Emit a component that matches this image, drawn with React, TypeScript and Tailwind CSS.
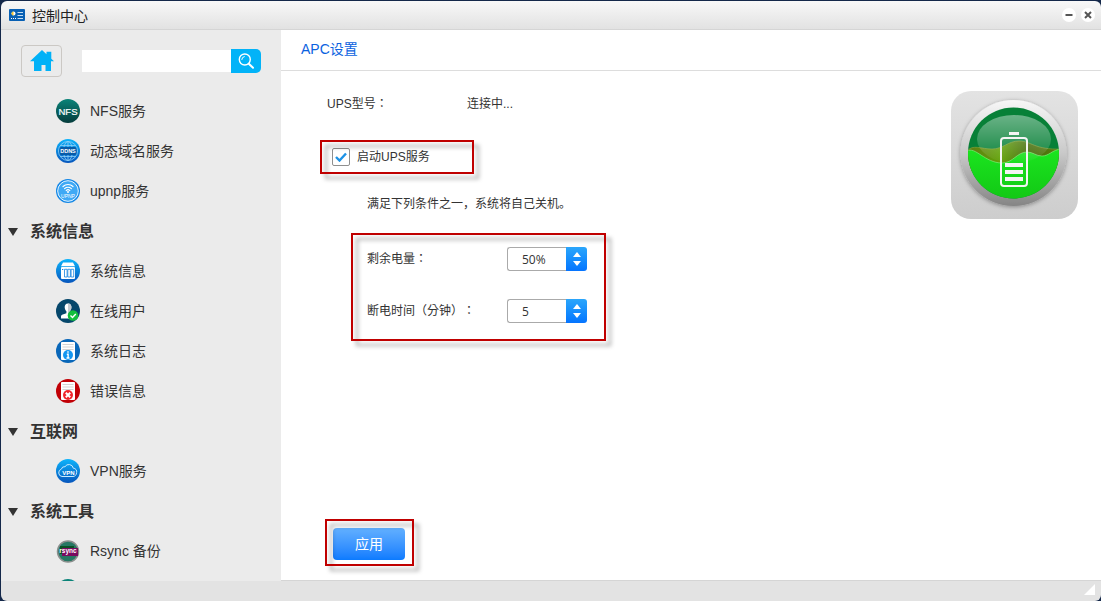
import React, { useState } from "react";

interface MenuItem {
  label: string;
  icon: React.ReactNode;
}

interface MenuGroup {
  title?: string;
  items: MenuItem[];
}

const NfsIcon = () => (
  <svg viewBox="0 0 24 24" className="w-6 h-6">
    <defs>
      <linearGradient id="nfs" x1="0" y1="0" x2="0" y2="1">
        <stop offset="0" stopColor="#0a8378" />
        <stop offset="1" stopColor="#063c3c" />
      </linearGradient>
    </defs>
    <circle cx="12" cy="12" r="12" fill="url(#nfs)" />
    <text x="12" y="15.5" textAnchor="middle" fontSize="9.5" fill="#fff" stroke="#fff" strokeWidth="0.2">
      NFS
    </text>
  </svg>
);

const DdnsIcon = () => (
  <svg viewBox="0 0 24 24" className="w-6 h-6">
    <circle cx="12" cy="12" r="12" fill="url(#blue)" />
    <g fill="none" stroke="#8fd0f8" strokeWidth="0.8">
      <circle cx="12" cy="12" r="9.5" />
      <ellipse cx="12" cy="12" rx="4.5" ry="9.5" />
      <path d="M12 2.5v19M4.5 6.5h15M4.5 17.5h15" />
    </g>
    <rect x="3.5" y="8" width="17" height="8" rx="2" fill="#075ba8" />
    <text x="12" y="14.2" textAnchor="middle" fontSize="5.5" fontWeight="bold" fill="#fff">
      DDNS
    </text>
  </svg>
);

const UpnpIcon = () => (
  <svg viewBox="0 0 24 24" className="w-6 h-6">
    <circle cx="12" cy="12" r="12" fill="#1487e6" />
    <circle cx="12" cy="12" r="10.3" fill="#3fa9f5" stroke="#e5f5ff" strokeWidth="1" />
    <g fill="none" stroke="#fff" strokeWidth="1.2" strokeLinecap="round">
      <path d="M7 7.5a7.3 7.3 0 0 1 10 0M8.6 9.6a5 5 0 0 1 6.8 0M10.2 11.6a2.6 2.6 0 0 1 3.6 0" />
    </g>
    <circle cx="12" cy="13" r="1" fill="#fff" />
    <text x="12" y="19" textAnchor="middle" fontSize="5" fill="#fff">
      UPNP
    </text>
  </svg>
);

const ServerIcon = () => (
  <svg viewBox="0 0 24 24" className="w-6 h-6">
    <circle cx="12" cy="12" r="12" fill="url(#blue)" />
    <path d="M7 3.5h10l2 3.8H5z" fill="#fff" />
    <rect x="5" y="8" width="14" height="12" rx="1" fill="#fff" />
    <g fill="#fff" stroke="#1583df" strokeWidth="0.8">
      <path d="M8.5 10.3h2.6v7.700H8.500zM11.800 10.300h2.600v7.700h-2.600zM15.100 10.300h2.600v7.700h-2.600z" />
    </g>
    <path d="M6 10.500h1.300" stroke="#1583df" />
  </svg>
);

const UserIcon = () => (
  <svg viewBox="0 0 24 24" className="w-6 h-6">
    <circle cx="12" cy="12" r="12" fill="#06476b" />
    <path
      d="M12 4.500c2.500 0 3.600 1.700 3.400 4-.1 1.700-.8 3-1.600 3.800v2l5.200 2.500v2.700H5v-2.200c0-1 .8-1.500 1.800-1.800l3.600-1.300v-2c-1-.9-1.600-2.200-1.700-3.700-.2-2.300.9-4 3.300-4z"
      fill="#fff"
    />
    <path d="M12 4.500c2.500 0 3.600 1.700 3.400 4-.1 1.700-.8 3-1.600 3.800v2l5.200 2.500v2.700h-7z" fill="#c5cbd0" />
    <circle cx="17" cy="16.500" r="5.300" fill="#12bf3c" />
    <path d="M14.500 16.500l2 2 3.300-3.500" fill="none" stroke="#fff" strokeWidth="1.400" />
  </svg>
);

const LogIcon = ({ error = false }: { error?: boolean }) => (
  <svg viewBox="0 0 24 24" className="w-6 h-6">
    <circle cx="12" cy="12" r="12" fill={error ? "#c10006" : "#0967b9"} />
    <rect x="5" y="3" width="14" height="18" rx="1" fill="#fff" />
    <path d="M6.500 5.500h11M6.500 8h11M6.500 10.500h11" stroke="#d3d3d3" />
    <circle cx="12" cy="16" r="5" fill={error ? "#f0262c" : "#1496f0"} />
    {error ? (
      <path d="M9.800 13.800l4.400 4.400M14.200 13.800l-4.400 4.400" stroke="#fff" strokeWidth="2" />
    ) : (
      <path d="M12 12.300v1.500M10.800 15.200h1.300v3.800M10.500 19h3" fill="none" stroke="#fff" strokeWidth="1.400" />
    )}
  </svg>
);

const VpnIcon = () => (
  <svg viewBox="0 0 24 24" className="w-6 h-6">
    <circle cx="12" cy="12" r="12" fill="url(#blue)" />
    <path
      d="M6 17.500a3.800 3.800 0 0 1-.6-7.400A3.200 3.200 0 0 1 9 7.700a4.500 4.500 0 0 1 8.300 1.500 3.500 3.500 0 0 1 3.300 4.500c-.2 2.300-1.600 3.800-3.600 3.800z"
      fill="none"
      stroke="#c7eaff"
    />
    <text x="12.500" y="16" textAnchor="middle" fontSize="6" fontWeight="bold" fill="#fff">
      VPN
    </text>
  </svg>
);

const RsyncIcon = () => (
  <svg viewBox="0 0 24 24" className="w-6 h-6">
    <circle cx="12" cy="12.500" r="10.500" fill="#267763" stroke="#8b8f8d" strokeWidth="1.500" />
    <rect x="4" y="7" width="14" height="8" fill="#0a5124" />
    <rect x="6" y="9" width="16" height="8" fill="#7b0b60" />
    <text x="12" y="14" textAnchor="middle" fontSize="6.500" fontWeight="bold" fill="#fff">
      rsync
    </text>
  </svg>
);

const menu: MenuGroup[] = [
  {
    items: [
      { label: "NFS服务", icon: <NfsIcon /> },
      { label: "动态域名服务", icon: <DdnsIcon /> },
      { label: "upnp服务", icon: <UpnpIcon /> },
    ],
  },
  {
    title: "系统信息",
    items: [
      { label: "系统信息", icon: <ServerIcon /> },
      { label: "在线用户", icon: <UserIcon /> },
      { label: "系统日志", icon: <LogIcon /> },
      { label: "错误信息", icon: <LogIcon error /> },
    ],
  },
  {
    title: "互联网",
    items: [{ label: "VPN服务", icon: <VpnIcon /> }],
  },
  {
    title: "系统工具",
    items: [{ label: "Rsync 备份", icon: <RsyncIcon /> }],
  },
];

const TitleBar = () => (
  <header className="flex items-center h-[29px] shrink-0 pl-2 pr-1.5 border-b border-[#d5d5d5] bg-linear-to-b from-[#f8f8f8] to-[#e2e2e2]">
    <svg viewBox="0 0 16 12" className="w-4 h-3">
      <rect width="16" height="12" rx="1" fill="#0860b4" />
      <circle cx="4.500" cy="4.500" r="2" fill="#fff" />
      <path d="M4.500 4.500V2.500a2 2 0 0 0 0 4z" fill="#f6c530" />
      <path d="M8.500 3.500h5.500M8.500 6.500h5.500M8.500 9.500h5.500" stroke="#c5ddf2" />
      <path d="M2 9.500h5" stroke="#fff" strokeDasharray="1 1" />
    </svg>
    <h1 className="ml-[7px] pt-px text-sm text-[#222]">控制中心</h1>
    <div className="ml-auto flex gap-[5px]">
      <button aria-label="最小化" className="w-3.5 h-3.5 rounded-full bg-white">
        <svg viewBox="0 0 14 14">
          <path d="M3.500 7h7" stroke="#555" strokeWidth="2" />
        </svg>
      </button>
      <button aria-label="关闭" className="w-3.5 h-3.5 rounded-full bg-white">
        <svg viewBox="0 0 14 14">
          <path d="M4 4l6 6M10 4l-6 6" stroke="#555" strokeWidth="2" />
        </svg>
      </button>
    </div>
  </header>
);

const Sidebar = () => (
  <aside className="flex flex-col w-[280px] shrink-0 overflow-hidden bg-[#ebebeb]">
    <div className="flex items-center gap-5 h-[61px] shrink-0 px-5">
      <button
        aria-label="主页"
        className="flex items-center justify-center w-[41px] h-8 shrink-0 rounded-sm border border-[#cbc8c4]"
      >
        <svg viewBox="0 0 24 22" className="w-6 h-[22px]" fill="#00b1f7">
          <path d="M12 0l4.500 4.200V1.700h4.800v7L24 11.300h-3V21h-5.500v-6h-4v6H4v-9.700H0z" />
        </svg>
      </button>
      <form className="flex flex-1 items-center min-w-0" onSubmit={(e) => e.preventDefault()}>
        <input aria-label="搜索" className="flex-1 min-w-0 h-[22px] px-2 text-xs bg-white outline-none" />
        <button
          aria-label="搜索"
          className="flex items-center justify-center w-[30px] h-6 rounded-r-[5px] bg-[#02b3f8]"
        >
          <svg viewBox="0 0 16 16" className="w-4 h-4" fill="none" stroke="#fff" strokeLinecap="round">
            <circle cx="6.800" cy="6.500" r="5.500" strokeWidth="1.400" />
            <path d="M10.800 10.800l4.200 4" strokeWidth="2" />
            <path d="M3.800 6.500a3 3 0 0 1 2.500-2.900" />
          </svg>
        </button>
      </form>
    </div>
    <nav className="text-sm text-[#333]">
      {menu.map((group, index) => (
        <section key={index}>
          {group.title && (
            <h2 className="flex items-center h-10 pl-[7px] pt-px gap-3 text-base font-bold">
              <svg viewBox="0 0 10 8" className="w-2.5 h-2">
                <path d="M0 0h10L5 8z" fill="#333" />
              </svg>
              {group.title}
            </h2>
          )}
          {group.items.map((item) => (
            <a key={item.label} href="#" className="flex items-center h-10 pl-[55px] gap-2.5">
              {item.icon}
              {item.label}
            </a>
          ))}
        </section>
      ))}
      <div className="pl-[55px] pt-2">
        <svg viewBox="0 0 24 24" className="w-6 h-6">
          <circle cx="12" cy="12" r="12" fill="#0a8378" />
        </svg>
      </div>
    </nav>
  </aside>
);

// Red callout drawn around a part of the form
const Callout = ({ className, children }: { className: string; children: React.ReactNode }) => (
  <div className={`relative ${className}`}>
    {children}
    <span className="absolute inset-0 border-2 border-[#c00000] drop-shadow-[5px_5px_2px_rgba(0,0,0,0.35)] pointer-events-none" />
  </div>
);

interface StepperProps {
  id: string;
  label: string;
  value: number;
  step: number;
  suffix?: string;
  onChange: (value: number) => void;
}

const Stepper = ({ id, label, value, step, suffix = "", onChange }: StepperProps) => (
  <div className="flex items-center h-6">
    <label htmlFor={id} className="w-[140px] font-['Liberation_Sans','Noto_Sans_CJK_TC',sans-serif]">
      {label}
    </label>
    <input
      id={id}
      value={`${value}${suffix}`}
      onChange={(e) => onChange(parseInt(e.target.value) || 0)}
      className="w-[59px] h-6 pl-3.5 rounded-l-[3px] border border-r-0 border-[#aaa] bg-white outline-none font-['Open_Sans',sans-serif]"
    />
    <div className="flex flex-col w-[21px] h-6 py-[3px] rounded-r-[3px] bg-linear-to-b from-[#2ba6fb] to-[#0674ff]">
      <button
        aria-label="增加"
        className="flex flex-1 items-center justify-center"
        onClick={() => onChange(value + step)}
      >
        <svg viewBox="0 0 8 5" className="w-2 h-[5px]">
          <path d="M0 5h8L4 0z" fill="#fff" />
        </svg>
      </button>
      <button
        aria-label="减少"
        className="flex flex-1 items-center justify-center"
        onClick={() => onChange(Math.max(0, value - step))}
      >
        <svg viewBox="0 0 8 5" className="w-2 h-[5px]">
          <path d="M0 0h8L4 5z" fill="#fff" />
        </svg>
      </button>
    </div>
  </div>
);

const BatteryLogo = () => (
  <svg viewBox="0 0 128 128" className="w-32 h-32 shrink-0">
    <defs>
      <linearGradient id="tile" x1="0" y1="0" x2="0" y2="1">
        <stop offset="0" stopColor="#e3e3e3" />
        <stop offset="1" stopColor="#cdcdcd" />
      </linearGradient>
      <linearGradient id="ring" x1="0" y1="0" x2="0" y2="1">
        <stop offset="0" stopColor="#f7f7f7" />
        <stop offset="0.500" stopColor="#c9c9c9" />
        <stop offset="1" stopColor="#858585" />
      </linearGradient>
      <linearGradient id="gloss" x1="0" y1="0" x2="0" y2="1">
        <stop offset="0" stopColor="#fff" stopOpacity="0.400" />
        <stop offset="1" stopColor="#fff" stopOpacity="0.020" />
      </linearGradient>
      <linearGradient id="liquid" x1="0" y1="0" x2="0" y2="1">
        <stop offset="0" stopColor="#1be51f" />
        <stop offset="1" stopColor="#12c715" />
      </linearGradient>
      <linearGradient id="wave" x1="0" y1="0" x2="1" y2="0">
        <stop offset="0" stopColor="#5f7a14" />
        <stop offset="0.350" stopColor="#62a208" />
        <stop offset="0.650" stopColor="#436b08" />
        <stop offset="1" stopColor="#5a7d12" />
      </linearGradient>
      <clipPath id="dial">
        <circle cx="62.500" cy="62" r="45.500" />
      </clipPath>
      <filter id="soft" x="-20%" y="-20%" width="140%" height="140%">
        <feDropShadow dx="0" dy="1" stdDeviation="2" floodOpacity="0.350" />
      </filter>
    </defs>
    <rect width="127" height="128" rx="20" fill="url(#tile)" />
    <circle cx="62.500" cy="62" r="53" fill="url(#ring)" filter="url(#soft)" />
    <g clipPath="url(#dial)">
      <rect x="16" y="16" width="94" height="94" fill="#078037" />
      <path
        d="M16 60C22 53 30 58 41 58C52 58 57 50 68 50C80 50 84 59 110 58V80H16z"
        fill="url(#wave)"
        stroke="#8aa33c"
        strokeWidth="0.600"
      />
      <path
        d="M16 60C24 55 34 72 51 72C62 72 66 61 76 61C82 61 85 65 91 65C98 65 101 59 110 58V110H16z"
        fill="url(#liquid)"
        stroke="#8df28a"
        strokeWidth="0.600"
      />
      <ellipse cx="63" cy="48" rx="37" ry="24" fill="url(#gloss)" />
    </g>
    <rect x="58" y="41" width="10" height="3" fill="#f4f4f4" />
    <rect x="50" y="47" width="26" height="48" rx="3" fill="none" stroke="#f4f4f4" strokeWidth="2" />
    <path d="M54 74h18M54 81h18M54 88h18" stroke="#f4f4f4" strokeWidth="4" />
  </svg>
);

const ApcSettings = () => {
  const [enabled, setEnabled] = useState(true);
  const [battery, setBattery] = useState(50);
  const [minutes, setMinutes] = useState(5);

  return (
    <main className="flex flex-col flex-1 min-w-0 bg-white border-b border-[#d5d5d5]">
      <h2 className="h-[41px] shrink-0 pl-5 pt-[9px] border-b border-[#ddd] text-sm text-[#0b62e0]">APC设置</h2>
      <div className="flex flex-1 items-start pt-5 pl-[39px] pr-[22px]">
        <div className="flex flex-col flex-1 items-start self-stretch text-xs text-[#333]">
          <dl className="flex h-[29px] pl-[7px] pt-[5px]">
            <dt className="w-[140px] font-['Liberation_Sans','Noto_Sans_CJK_TC',sans-serif]">UPS型号：</dt>
            <dd>连接中...</dd>
          </dl>
          <Callout className="mt-5 w-[154px] h-[34px]">
            <label className="flex items-center gap-[7px] h-full pl-3">
              <input
                type="checkbox"
                checked={enabled}
                onChange={(e) => setEnabled(e.target.checked)}
                className="sr-only"
              />
              <span className="flex items-center justify-center w-[18px] h-[18px] rounded-[2px] border border-[#8f8f8f] bg-white">
                {enabled && (
                  <svg viewBox="0 0 12 10" className="w-3 h-2.5">
                    <path d="M1 5l3.500 3.500L11 1.500" fill="none" stroke="#1c92e6" strokeWidth="2.400" />
                  </svg>
                )}
              </span>
              启动UPS服务
            </label>
          </Callout>
          <p className="mt-[22px] pl-[47px]">满足下列条件之一，系统将自己关机。</p>
          <Callout className="ml-[31px] mt-[21px] w-[255px] h-[108px]">
            <div className="flex flex-col gap-7 pl-4 pt-3.5">
              <Stepper id="battery" label="剩余电量：" value={battery} step={5} suffix="%" onChange={setBattery} />
              <Stepper id="minutes" label="断电时间（分钟）：" value={minutes} step={1} onChange={setMinutes} />
            </div>
          </Callout>
          <Callout className="ml-[5px] mt-auto mb-3.5 w-[89px] h-[47px] pl-2 pt-[9px]">
            <button className="block w-[72px] h-8 rounded-sm text-sm text-white bg-linear-to-b from-[#62b0ff] to-[#0a7bff]">
              应用
            </button>
          </Callout>
        </div>
        <BatteryLogo />
      </div>
    </main>
  );
};

const App = () => (
  <div className="h-screen pl-px pt-px bg-[#14284a] font-['Liberation_Sans','Noto_Sans_CJK_SC',sans-serif] [text-spacing-trim:space-all]">
    <svg className="absolute w-0 h-0">
      <defs>
        <linearGradient id="blue" x1="0" y1="0" x2="0" y2="1">
          <stop offset="0" stopColor="#0db4fb" />
          <stop offset="1" stopColor="#0756bd" />
        </linearGradient>
      </defs>
    </svg>
    <div className="flex flex-col h-full overflow-hidden rounded-md">
      <TitleBar />
      <div className="flex flex-1 min-h-0">
        <Sidebar />
        <ApcSettings />
      </div>
      <footer className="flex items-start justify-end h-5 shrink-0 pt-[3px] pr-1.5 bg-[#e3e3e3]">
        <svg viewBox="0 0 11 11" className="w-[11px] h-[11px]">
          <path d="M11 0v11H0z" fill="#fff" />
        </svg>
      </footer>
    </div>
  </div>
);

export default App;
